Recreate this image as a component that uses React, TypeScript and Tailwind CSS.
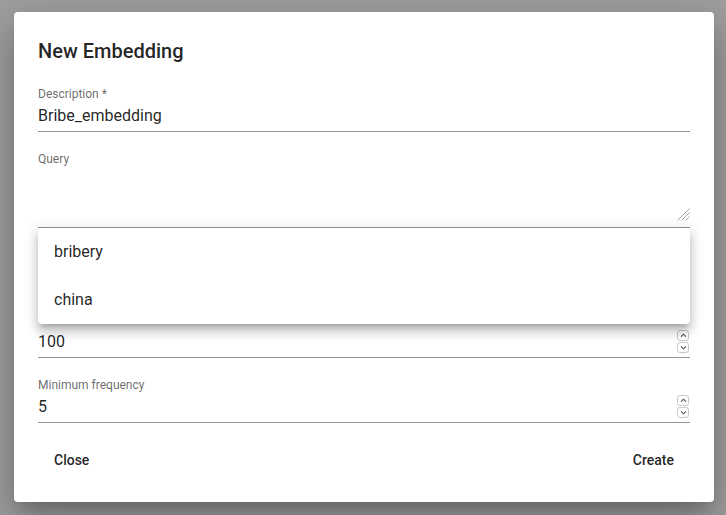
import type { ReactNode } from 'react'

interface FieldProps {
  label?: string
  children: ReactNode
}

function Field({ label, children }: FieldProps) {
  return (
    <div className="flex flex-col">
      <label className="mt-[2px] block h-4 text-xs leading-4 text-[rgba(0,0,0,0.6)]">
        {label ?? '\u00a0'}
      </label>
      <div className="relative border-b border-[rgba(0,0,0,0.42)] pt-[2px] pb-[4px]">{children}</div>
    </div>
  )
}

const inputClass =
  'block h-[23px] w-full bg-transparent text-base leading-[23px] text-[rgba(0,0,0,0.87)] outline-none'

function Stepper() {
  return (
    <div className="flex shrink-0 flex-col gap-[1px] pr-[1px]">
      <span className="flex h-[11px] w-[12px] items-center justify-center rounded-[3px] border border-[#c8c8c8]">
        <svg viewBox="0 0 8 8" className="h-[7px] w-[7px]" fill="none">
          <path d="M1.5 5L4 2.5L6.5 5" stroke="#555" strokeWidth="1.2" strokeLinecap="round" strokeLinejoin="round" />
        </svg>
      </span>
      <span className="flex h-[11px] w-[12px] items-center justify-center rounded-[3px] border border-[#c8c8c8]">
        <svg viewBox="0 0 8 8" className="h-[7px] w-[7px]" fill="none">
          <path d="M1.5 3L4 5.5L6.5 3" stroke="#555" strokeWidth="1.2" strokeLinecap="round" strokeLinejoin="round" />
        </svg>
      </span>
    </div>
  )
}

function NumberInput({ value }: { value: number }) {
  return (
    <div className="flex items-center">
      <input
        type="number"
        defaultValue={value}
        className={`${inputClass} min-w-0 flex-1 [appearance:textfield] [&::-webkit-inner-spin-button]:appearance-none [&::-webkit-outer-spin-button]:appearance-none`}
      />
      <Stepper />
    </div>
  )
}

export default function App() {
  const suggestions = ['bribery', 'china']

  return (
    <div className="h-[515px] w-full overflow-hidden bg-[#9f9f9f] pt-[12px] pl-[14px] font-['Roboto','Liberation_Sans',sans-serif]">
      <div className="relative flex h-[490px] w-[700px] flex-col rounded bg-white shadow-[0px_11px_15px_-7px_rgba(0,0,0,0.2),0px_24px_38px_3px_rgba(0,0,0,0.14),0px_9px_46px_8px_rgba(0,0,0,0.12)]">
        <h2 className="px-6 pt-[23px] text-xl leading-8 font-medium text-[rgba(0,0,0,0.87)]">
          New Embedding
        </h2>

        <div className="mt-[17px] flex flex-col gap-[17px] px-6">
          <Field label="Description *">
            <input type="text" defaultValue="Bribe_embedding" className={inputClass} />
          </Field>

          <Field label="Query">
            <textarea className="block h-[54px] w-full resize-none bg-transparent text-base leading-[23px] text-[rgba(0,0,0,0.87)] outline-none" />
            {/* resize grip */}
            <svg
              viewBox="0 0 13 13"
              className="pointer-events-none absolute right-0 bottom-[6px] h-[13px] w-[13px]"
              fill="none"
            >
              <path d="M12.5 0.5L0.5 12.5M12.5 4.5L4.5 12.5M12.5 8.5L8.5 12.5" stroke="#a6a6a6" strokeWidth="1" />
            </svg>
          </Field>

          <Field>
            <input type="text" className={inputClass} />
          </Field>

          <Field>
            <NumberInput value={100} />
          </Field>

          <Field label="Minimum frequency">
            <NumberInput value={5} />
          </Field>
        </div>

        <div className="mt-[19px] flex items-center justify-between px-6">
          <button
            type="button"
            className="min-w-16 rounded px-4 py-[6px] text-sm leading-[24.5px] font-medium text-[rgba(0,0,0,0.87)]"
          >
            Close
          </button>
          <button
            type="button"
            className="min-w-16 rounded px-4 py-[6px] text-sm leading-[24.5px] font-medium text-[rgba(0,0,0,0.87)]"
          >
            Create
          </button>
        </div>

        {/* autocomplete popup for the query field */}
        <ul className="absolute top-[216px] right-6 left-6 rounded-b bg-white shadow-[0px_5px_5px_-3px_rgba(0,0,0,0.2),0px_8px_10px_1px_rgba(0,0,0,0.14),0px_3px_14px_2px_rgba(0,0,0,0.12)]">
          {suggestions.map((s) => (
            <li
              key={s}
              className="flex h-12 items-center px-4 text-base text-[rgba(0,0,0,0.87)]"
            >
              {s}
            </li>
          ))}
        </ul>
      </div>
    </div>
  )
}
